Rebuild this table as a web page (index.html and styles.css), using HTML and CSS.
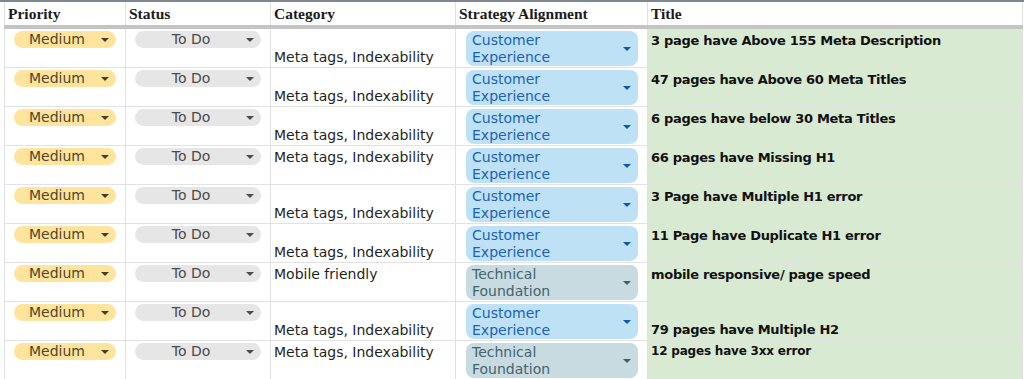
FILE: index.html
```html
<!DOCTYPE html>
<html>
<head>
<meta charset="utf-8">
<link rel="stylesheet" href="styles.css">
</head>
<body>
<div class="sheet">
<table class="grid">
  <colgroup>
    <col class="c-pri"><col class="c-sta"><col class="c-cat"><col class="c-str"><col class="c-tit">
  </colgroup>
  <thead>
    <tr><th>Priority</th><th>Status</th><th>Category</th><th>Strategy Alignment</th><th>Title</th></tr>
  </thead>
  <tbody>
    <tr>
      <td class="top"><span class="chip medium">Medium<i class="arr"></i></span></td>
      <td class="top"><span class="chip todo">To Do<i class="arr"></i></span></td>
      <td class="bottom">Meta tags, Indexability</td>
      <td class="top"><span class="chip cx">Customer Experience<i class="arr"></i></span></td>
      <td class="title top">3 page have Above 155 Meta Description</td>
    </tr>
    <tr>
      <td class="top"><span class="chip medium">Medium<i class="arr"></i></span></td>
      <td class="top"><span class="chip todo">To Do<i class="arr"></i></span></td>
      <td class="bottom">Meta tags, Indexability</td>
      <td class="top"><span class="chip cx">Customer Experience<i class="arr"></i></span></td>
      <td class="title top">47 pages have Above 60 Meta Titles</td>
    </tr>
    <tr>
      <td class="top"><span class="chip medium">Medium<i class="arr"></i></span></td>
      <td class="top"><span class="chip todo">To Do<i class="arr"></i></span></td>
      <td class="bottom">Meta tags, Indexability</td>
      <td class="top"><span class="chip cx">Customer Experience<i class="arr"></i></span></td>
      <td class="title top">6 pages have below 30 Meta Titles</td>
    </tr>
    <tr>
      <td class="top"><span class="chip medium">Medium<i class="arr"></i></span></td>
      <td class="top"><span class="chip todo">To Do<i class="arr"></i></span></td>
      <td class="top">Meta tags, Indexability</td>
      <td class="top"><span class="chip cx">Customer Experience<i class="arr"></i></span></td>
      <td class="title top">66 pages have Missing H1</td>
    </tr>
    <tr>
      <td class="top"><span class="chip medium">Medium<i class="arr"></i></span></td>
      <td class="top"><span class="chip todo">To Do<i class="arr"></i></span></td>
      <td class="bottom">Meta tags, Indexability</td>
      <td class="top"><span class="chip cx">Customer Experience<i class="arr"></i></span></td>
      <td class="title top">3 Page have Multiple H1 error</td>
    </tr>
    <tr>
      <td class="top"><span class="chip medium">Medium<i class="arr"></i></span></td>
      <td class="top"><span class="chip todo">To Do<i class="arr"></i></span></td>
      <td class="bottom">Meta tags, Indexability</td>
      <td class="top"><span class="chip cx">Customer Experience<i class="arr"></i></span></td>
      <td class="title top">11 Page have Duplicate H1 error</td>
    </tr>
    <tr>
      <td class="top"><span class="chip medium">Medium<i class="arr"></i></span></td>
      <td class="top"><span class="chip todo">To Do<i class="arr"></i></span></td>
      <td class="top">Mobile friendly</td>
      <td class="top"><span class="chip tf">Technical Foundation<i class="arr"></i></span></td>
      <td class="title top">mobile responsive/ page speed</td>
    </tr>
    <tr>
      <td class="top"><span class="chip medium">Medium<i class="arr"></i></span></td>
      <td class="top"><span class="chip todo">To Do<i class="arr"></i></span></td>
      <td class="bottom">Meta tags, Indexability</td>
      <td class="top"><span class="chip cx">Customer Experience<i class="arr"></i></span></td>
      <td class="title bottom">79 pages have Multiple H2</td>
    </tr>
    <tr>
      <td class="top"><span class="chip medium">Medium<i class="arr"></i></span></td>
      <td class="top"><span class="chip todo">To Do<i class="arr"></i></span></td>
      <td class="top">Meta tags, Indexability</td>
      <td class="top"><span class="chip tf">Technical Foundation<i class="arr"></i></span></td>
      <td class="title top small">12 pages have 3xx error</td>
    </tr>
  </tbody>
</table>
</div>
</body>
</html>
```

FILE: styles.css
```css
html, body {
  margin: 0;
  padding: 0;
  background: #ffffff;
}
body {
  width: 1024px;
  height: 379px;
  overflow: hidden;
}
.sheet {
  border-top: 2px solid #7d8792;
  padding-left: 4px;
}
.grid {
  border-collapse: collapse;
  table-layout: fixed;
  width: 1018px;
  font-family: "DejaVu Sans", sans-serif;
  font-size: 14px;
  color: #1f1f1f;
}
.c-pri { width: 121px; }
.c-sta { width: 145px; }
.c-cat { width: 185px; }
.c-str { width: 192px; }
.c-tit { width: 375px; }

.grid th {
  height: 23px;
  padding: 0 3px;
  text-align: left;
  font-family: "Liberation Serif", serif;
  font-weight: bold;
  font-size: 15.5px;
  color: #1b1b1b;
  border-left: 1px solid #e2e2e2;
  border-right: 1px solid #e2e2e2;
  border-bottom: 4px solid #c4c4c4;
  vertical-align: middle;
}
.grid tbody tr { height: 39px; }
.grid td {
  padding: 2px 3px 1px;
  border: 1px solid #e2e2e2;
  line-height: 17px;
}
.grid td.top { vertical-align: top; }
.grid td.bottom { vertical-align: bottom; padding-bottom: 1px; }
.grid td:nth-child(3).top { padding-top: 3px; }
.grid td.title {
  background: #d9ead3;
  font-weight: bold;
  font-size: 13px;
  letter-spacing: -0.3px;
  color: #111;
  padding-top: 3px;
}
.grid td.title.bottom { padding-bottom: 2px; }
.grid td.title.small { font-size: 12px; letter-spacing: -0.2px; padding-top: 2px; }

.chip {
  position: relative;
  display: block;
  margin: 0 6px;
  border-radius: 9px;
  font-size: 14px;
  line-height: 17px;
  padding: 0 20px 0 6px;
}
.chip.medium {
  background: #fee49c;
  color: #54452a;
  padding-left: 15px;
}
.chip.todo {
  background: #e6e6e6;
  color: #4a4a4a;
  text-align: center;
}
.chip.cx, .chip.tf {
  margin: 0 6px 0 7px;
  padding: 1px 20px 0 6px;
  border-radius: 8px;
}
.chip.cx {
  background: #bfe1f6;
  color: #1a62c0;
}
.chip.tf {
  background: #c7dbe1;
  color: #45636d;
}
.arr {
  position: absolute;
  right: 7px;
  top: 7px;
  width: 0;
  height: 0;
  border-left: 4px solid transparent;
  border-right: 4px solid transparent;
  border-top: 4px solid #3c3c3c;
}
.chip.cx .arr { top: 16px; border-top-color: #0b57b8; }
.chip.tf .arr { top: 16px; border-top-color: #3f5f6a; }
.chip.medium .arr { border-top-color: #4a3b22; }
.chip.todo .arr { border-top-color: #4d4d4d; }
```
